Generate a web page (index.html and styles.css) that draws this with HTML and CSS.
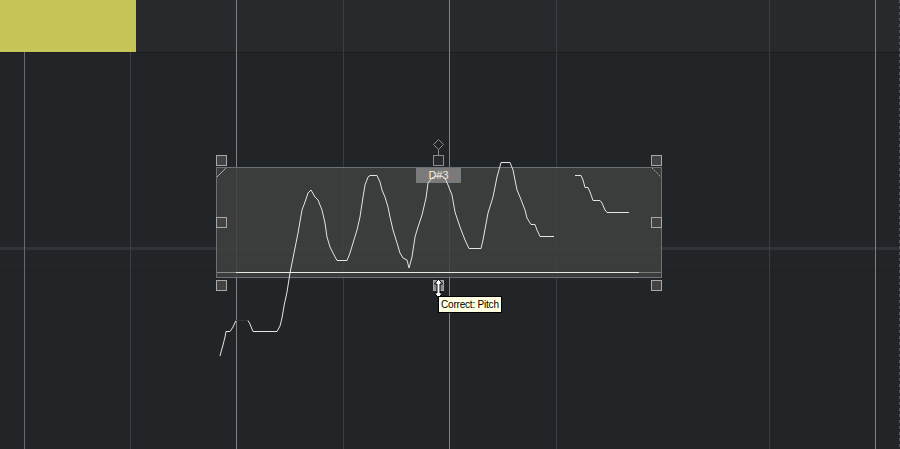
FILE: index.html
```html
<!DOCTYPE html>
<html lang="en">
  <head>
    <meta charset="UTF-8" />
    <meta name="viewport" content="width=device-width, initial-scale=1.0" />
    <title>Pitch Editor</title>
    <link rel="stylesheet" href="styles.css">
  </head>
  <body>
    <div class="editor">
      <div class="ruler">
        <div class="clip"></div>
      </div>
      <div class="lanes">
        <div class="lane-top"></div>
        <div class="lane-divider"></div>
        <div class="lane-gap"></div>
        <div class="lane-line"></div>
        <div class="lane-rest"></div>
      </div>

      <!-- bar / beat grid -->
      <svg class="grid" width="900" height="449" viewBox="0 0 900 449">
        <g stroke-width="1">
          <line x1="24.5" y1="0" x2="24.5" y2="449" stroke="#66696d" />
          <line x1="130.5" y1="0" x2="130.5" y2="449" stroke="#3a3d41" />
          <line x1="236.5" y1="0" x2="236.5" y2="449" stroke="#7d8084" />
          <line x1="343.5" y1="0" x2="343.5" y2="449" stroke="#3a3d41" />
          <line x1="449.5" y1="0" x2="449.5" y2="449" stroke="#7d8084" />
          <line x1="556.5" y1="0" x2="556.5" y2="449" stroke="#3a3d41" />
          <line x1="769.5" y1="0" x2="769.5" y2="449" stroke="#3a3d41" />
          <line x1="875.5" y1="0" x2="875.5" y2="449" stroke="#7d8084" />
          <line x1="899.5" y1="0" x2="899.5" y2="449" stroke="#55585c" stroke-dasharray="3 3" />
        </g>
      </svg>

      <div class="selection">
        <div class="baseline"></div>
      </div>

      <div class="handle handle-tl"></div>
      <div class="handle handle-tm"></div>
      <div class="handle handle-tr"></div>
      <div class="handle handle-ml"></div>
      <div class="handle handle-mr"></div>
      <div class="handle handle-bl"></div>
      <div class="handle handle-bm"></div>
      <div class="handle handle-br"></div>

      <div class="note-label">D#3</div>

      <!-- pitch curve and overlays -->
      <svg class="overlay" width="900" height="449" viewBox="0 0 900 449">
        <g fill="none" stroke-linejoin="round">
          <path d="M433.5 144.5 L438.5 139.5 L443.5 144.5 L438.5 149.5 Z" stroke="#8c8c8c" />
          <line x1="438.5" y1="149.5" x2="438.5" y2="155" stroke="#8c8c8c" />
          <line x1="217" y1="177" x2="226" y2="168" stroke="#a8a8a8" />
          <line x1="652" y1="168" x2="661" y2="177" stroke="#a8a8a8" stroke-dasharray="1.5 1" />

          <polyline stroke="#e4e4e4" stroke-width="1"
            points="220,356 221,352 223,345 225,337 226,331.5 230,331.5 233,327 236,320.5" />
          <line x1="236" y1="320.5" x2="248" y2="320.5" stroke="#34363a" stroke-width="1" />
          <polyline stroke="#e4e4e4" stroke-width="1"
            points="248,320.5 250,324 253,331.5 277,331.5 280,326 282,318 284,306 287,292 290,273 294,253 298,233 302,210 305,202 308,193 311,190 315,197 318,200 322,210 325,223 327,237 330,247 333,253 337,260.5 347,260.5 350,253 353,243 357,230 360,217 363,197 365,185 368,177 370,175.5 377,175.5 380,182 382,190 385,197 388,207 390,217 393,230 397,243 400,253 403,258 407,260 409,268 412,257 415,237 418,227 422,215 426,198 428,183 432,178 436,176 442,176 446,180 448,185 452,195 455,212 460,227 465,240 469,248.5 481,248.5 483,240 488,213 493,197 497,177 501,162.5 510,162.5 513,170 517,190 520,197 525,210 527,218 531,224.5 535,224.5 537,230 540,236.5 554,236.5" />
          <polyline stroke="#e4e4e4" stroke-width="1"
            points="575,175.5 581,175.5 583,180 585,187.5 588,187.5 590,192 593,200.5 600,200.5 602,203 605,210 607,212.5 629,212.5" />

          <path d="M438.5 279 L442.5 284 L440 284 L440 293 L442.5 293 L438.5 298 L434.5 293 L437 293 L437 284 L434.5 284 Z"
            fill="#ffffff" stroke="#000000" stroke-width="1" />
        </g>
      </svg>

      <div class="tooltip">Correct: Pitch</div>
    </div>
  </body>
</html>
```

FILE: styles.css
```css
body {
  margin: 0;
  background-color: #222528;
  font-family: "Liberation Sans", Arial, sans-serif;
}

.editor {
  position: relative;
  width: 900px;
  height: 449px;
  overflow: hidden;
  display: flex;
  flex-direction: column;
  background-color: #222528;
}

.ruler {
  height: 52px;
  flex: none;
  background-color: #272a2d;
  border-bottom: 1px solid #1b1d1f;
  display: flex;
}

.clip {
  position: relative;
  z-index: 1;
  width: 136px;
  height: 52px;
  background-color: #c6c558;
}

.lanes {
  flex: 1;
  display: flex;
  flex-direction: column;
}

.lane-top {
  height: 194px;
}

.lane-divider {
  height: 3px;
  background-color: #303337;
}

.lane-gap {
  height: 20px;
}

.lane-line {
  height: 1px;
  background-color: #1d1f22;
}

.lane-rest {
  flex: 1;
}

.grid,
.overlay {
  position: absolute;
  left: 0;
  top: 0;
}

.selection {
  position: absolute;
  left: 216px;
  top: 167px;
  width: 446px;
  height: 111px;
  box-sizing: border-box;
  border: 1px solid #6c7079;
  background-color: rgba(64, 64, 64, 0.86);
}

.baseline {
  position: absolute;
  left: 0;
  right: 0;
  bottom: 4px;
  height: 1px;
  background: linear-gradient(
    to right,
    #8a8a8a 0,
    #8a8a8a 19px,
    #e6e6e6 19px,
    #e6e6e6 422px,
    #7a7a7a 422px
  );
}

.handle {
  position: absolute;
  width: 11px;
  height: 11px;
  box-sizing: border-box;
  border: 1px solid #a8a8a8;
  background-color: #434343;
}

.handle-tl { left: 216px; top: 155px; }
.handle-tm { left: 433px; top: 155px; background-color: #272a2d; border-color: #8c8c8c; }
.handle-tr { left: 651px; top: 155px; }
.handle-ml { left: 216px; top: 217px; }
.handle-mr { left: 651px; top: 217px; }
.handle-bl { left: 216px; top: 280px; }
.handle-bm { left: 433px; top: 280px; background-color: #8a8a8a; }
.handle-br { left: 651px; top: 280px; }

.note-label {
  position: absolute;
  left: 416px;
  top: 168px;
  width: 45px;
  height: 15px;
  background-color: #7a7a7a;
  color: #f2f0d6;
  font-size: 11px;
  line-height: 15px;
  text-align: center;
}

.tooltip {
  position: absolute;
  left: 438px;
  top: 296px;
  height: 17px;
  padding: 0 2px;
  box-sizing: border-box;
  border: 1px solid #000;
  background-color: #ffffe1;
  color: #000;
  font-size: 10px;
  line-height: 15px;
  letter-spacing: -0.2px;
  white-space: nowrap;
}
```
